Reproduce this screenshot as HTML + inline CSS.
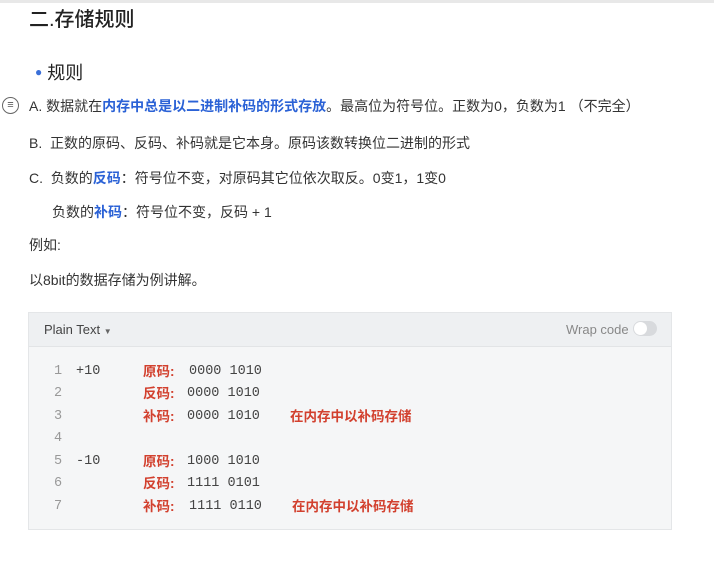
<!DOCTYPE html>
<html><head><meta charset="utf-8"><style>
body{margin:0;width:714px;height:568px;background:#fff;position:relative;overflow:hidden;font-family:"Liberation Sans","Noto Sans CJK SC",sans-serif;color:#333;}
.a{position:absolute;white-space:nowrap;}
.t{font-size:14px;line-height:20px;}
.b{color:#2b62d6;font-weight:bold;}
.mono{font-family:"Liberation Mono","DejaVu Sans Mono",monospace;font-size:13.5px;line-height:18px;color:#444;}
.r{color:#d2402e;font-family:"Liberation Sans","Noto Sans CJK SC",sans-serif;font-size:13.5px;line-height:18px;font-weight:bold;}
.ln{color:#999;}
</style></head><body>
<div class="a" style="left:0;top:0;width:714px;height:3px;background:#e8e8e8"></div>
<div class="a" style="left:29px;top:6px;font-size:20px;line-height:28px;color:#222;font-weight:500">二.存储规则</div>
<div class="a" style="left:35px;top:59px;font-size:18px;line-height:26px;color:#222"><span style="color:#3a6fd8;font-size:12px;vertical-align:3px">●</span>&nbsp;规则</div>
<div class="a" style="left:2px;top:97px;width:15px;height:15px;border:1.3px solid #666;border-radius:50%;font-size:11px;line-height:15px;text-align:center;color:#555">≡</div>
<div class="a t" style="left:29px;top:96px">A. 数据就在<span class="b">内存中总是以二进制补码的形式存放</span>。最高位为符号位。正数为0，负数为1 （不完全）</div>
<div class="a t" style="left:29px;top:133px">B.&nbsp; 正数的原码、反码、补码就是它本身。原码该数转换位二进制的形式</div>
<div class="a t" style="left:29px;top:168px">C.&nbsp; 负数的<span class="b">反码</span>：符号位不变，对原码其它位依次取反。0变1，1变0</div>
<div class="a t" style="left:52px;top:202px">负数的<span class="b">补码</span>：符号位不变，反码 + 1</div>
<div class="a t" style="left:29px;top:235px">例如:</div>
<div class="a t" style="left:29px;top:270px">以8bit的数据存储为例讲解。</div>
<div class="a" style="left:28px;top:312px;width:644px;height:218px;background:#f5f6f7;border:1px solid #e4e6e8;box-sizing:border-box"></div>
<div class="a" style="left:29px;top:313px;width:642px;height:33px;background:#eef0f2;border-bottom:1px solid #e2e4e6"></div>
<div class="a" style="left:44px;top:320px;font-size:13px;line-height:20px;color:#444">Plain Text <span style="font-size:8px;color:#666">▼</span></div>
<div class="a" style="left:566px;top:320px;font-size:13px;line-height:20px;color:#888">Wrap code</div>
<div class="a" style="left:633px;top:321px;width:24px;height:15px;border-radius:8px;background:#d8dadd"></div>
<div class="a" style="left:634px;top:322px;width:13px;height:13px;border-radius:50%;background:#fff"></div>

<div class="a mono ln" style="left:54px;top:363px">1</div>
<div class="a mono ln" style="left:54px;top:385px">2</div>
<div class="a mono ln" style="left:54px;top:408px">3</div>
<div class="a mono ln" style="left:54px;top:430px">4</div>
<div class="a mono ln" style="left:54px;top:453px">5</div>
<div class="a mono ln" style="left:54px;top:475px">6</div>
<div class="a mono ln" style="left:54px;top:498px">7</div>
<div class="a mono" style="left:76px;top:363px">+10</div>
<div class="a mono" style="left:76px;top:453px">-10</div>

<div class="a r" style="left:143px;top:363px">原码:</div><div class="a mono" style="left:189px;top:363px">0000 1010</div>
<div class="a r" style="left:143px;top:385px">反码:</div><div class="a mono" style="left:187px;top:385px">0000 1010</div>
<div class="a r" style="left:143px;top:408px">补码:</div><div class="a mono" style="left:187px;top:408px">0000 1010</div>
<div class="a r" style="left:290px;top:408px">在内存中以补码存储</div>
<div class="a r" style="left:143px;top:453px">原码:</div><div class="a mono" style="left:187px;top:453px">1000 1010</div>
<div class="a r" style="left:143px;top:475px">反码:</div><div class="a mono" style="left:187px;top:475px">1111 0101</div>
<div class="a r" style="left:143px;top:498px">补码:</div><div class="a mono" style="left:189px;top:498px">1111 0110</div>
<div class="a r" style="left:292px;top:498px">在内存中以补码存储</div>
</body></html>
